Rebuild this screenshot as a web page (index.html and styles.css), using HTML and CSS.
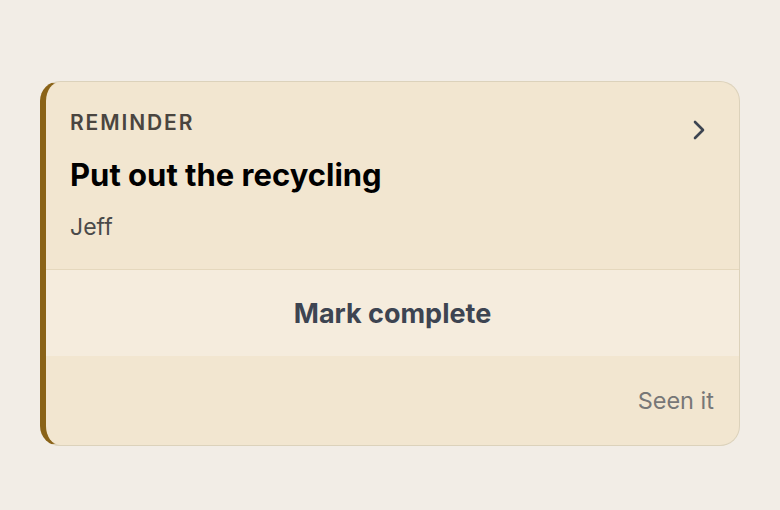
FILE: index.html
```html
<!DOCTYPE html>
<html>
<head>
<meta charset="utf-8">
<link rel="stylesheet" href="styles.css">
</head>
<body>
<div class="card">
  <div class="head">
    <div class="head-text">
      <div class="label">REMINDER</div>
      <div class="title">Put out the recycling</div>
      <div class="who">Jeff</div>
    </div>
    <svg class="chev" width="12" height="20" viewBox="0 0 12 20" fill="none" stroke="#3d4451" stroke-width="2.6" stroke-linecap="round" stroke-linejoin="round"><path d="M2 2L10 10L2 18"/></svg>
  </div>
  <div class="action">Mark complete</div>
  <div class="foot"><span class="seen">Seen it</span></div>
</div>
</body>
</html>
```
FILE: styles.css
```css
html, body {
  margin: 0;
  padding: 0;
  background: #f2ede6;
  font-family: Inter, "Noto Sans", sans-serif;
}
.card {
  margin: 81px 40px 0 40px;
  width: 700px;
  box-sizing: border-box;
  background: #f2e6d0;
  border: 1px solid #dcd2bb;
  border-left: 6px solid #8a6318;
  border-radius: 20px;
  overflow: hidden;
}
.head {
  display: flex;
  justify-content: space-between;
  align-items: flex-start;
  padding: 28px 34px 28px 24px;
  border-bottom: 1px solid #e5d8bd;
}
.label {
  font-size: 21px;
  font-weight: 600;
  letter-spacing: 0.09em;
  color: #4a4540;
  line-height: 26px;
}
.title {
  margin-top: 20px;
  font-size: 31px;
  font-weight: 700;
  color: #000;
  line-height: 38px;
}
.who {
  margin-top: 19px;
  font-size: 23px;
  color: #4a4a4a;
  line-height: 28px;
}
.chev {
  margin-top: 10px;
}
.action {
  background: #f5ecdd;
  height: 86px;
  display: flex;
  align-items: center;
  justify-content: center;
  font-size: 27px;
  font-weight: 700;
  color: #3d4451;
}
.foot {
  height: 89px;
  display: flex;
  align-items: center;
  justify-content: flex-end;
  padding-right: 25px;
}
.seen {
  font-size: 23.5px;
  color: #777777;
}
```
